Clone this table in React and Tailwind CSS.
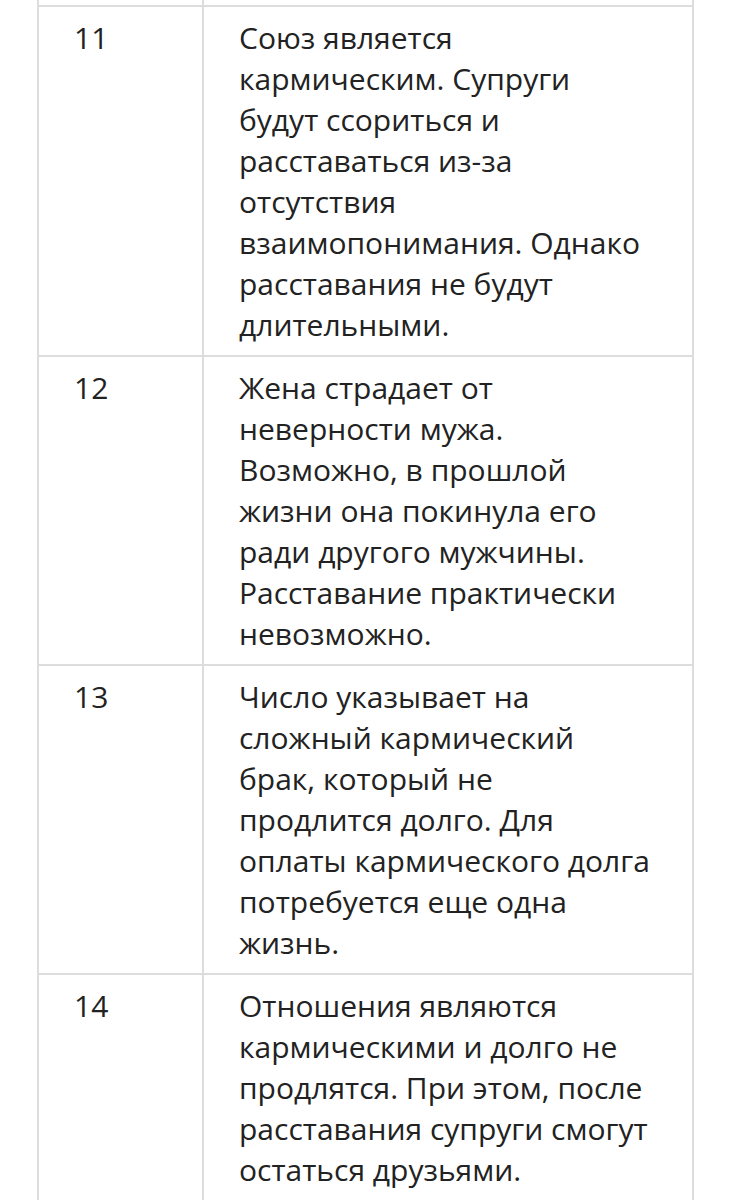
export default function App() {
  const rows = [
    ["11", ["Союз является", "кармическим. Супруги", "будут ссориться и", "расставаться из-за", "отсутствия", "взаимопонимания. Однако", "расставания не будут", "длительными."]],
    ["12", ["Жена страдает от", "неверности мужа.", "Возможно, в прошлой", "жизни она покинула его", "ради другого мужчины.", "Расставание практически", "невозможно."]],
    ["13", ["Число указывает на", "сложный кармический", "брак, который не", "продлится долго. Для", "оплаты кармического долга", "потребуется еще одна", "жизнь."]],
    ["14", ["Отношения являются", "кармическими и долго не", "продлятся. При этом, после", "расставания супруги смогут", "остаться друзьями."]],
  ];
  return (
    <div className="w-[731px] h-[1200px] bg-white overflow-hidden" style={{ fontFamily: '"Open Sans", "Noto Sans", sans-serif' }}>
      <div className="ml-[37px] w-[657px] border-l-2 border-r-2 border-[#dddddd] text-[30px] leading-[41px] text-[#222222]">
        <div className="flex h-[7px] border-b-2 border-[#dddddd]">
          <div className="w-[165px] shrink-0 border-r-2 border-[#dddddd]" />
          <div className="flex-1" />
        </div>
        {rows.map(([n, lines]) => (
          <div key={n} className="flex border-b-2 border-[#dddddd]">
            <div className="w-[165px] shrink-0 border-r-2 border-[#dddddd] pl-[35px] py-[10px]">{n}</div>
            <div className="flex-1 pl-[35px] pr-[2px] py-[10px] whitespace-nowrap">
              {lines.map((l, i) => (
                <div key={i}>{l}</div>
              ))}
            </div>
          </div>
        ))}
      </div>
    </div>
  );
}
